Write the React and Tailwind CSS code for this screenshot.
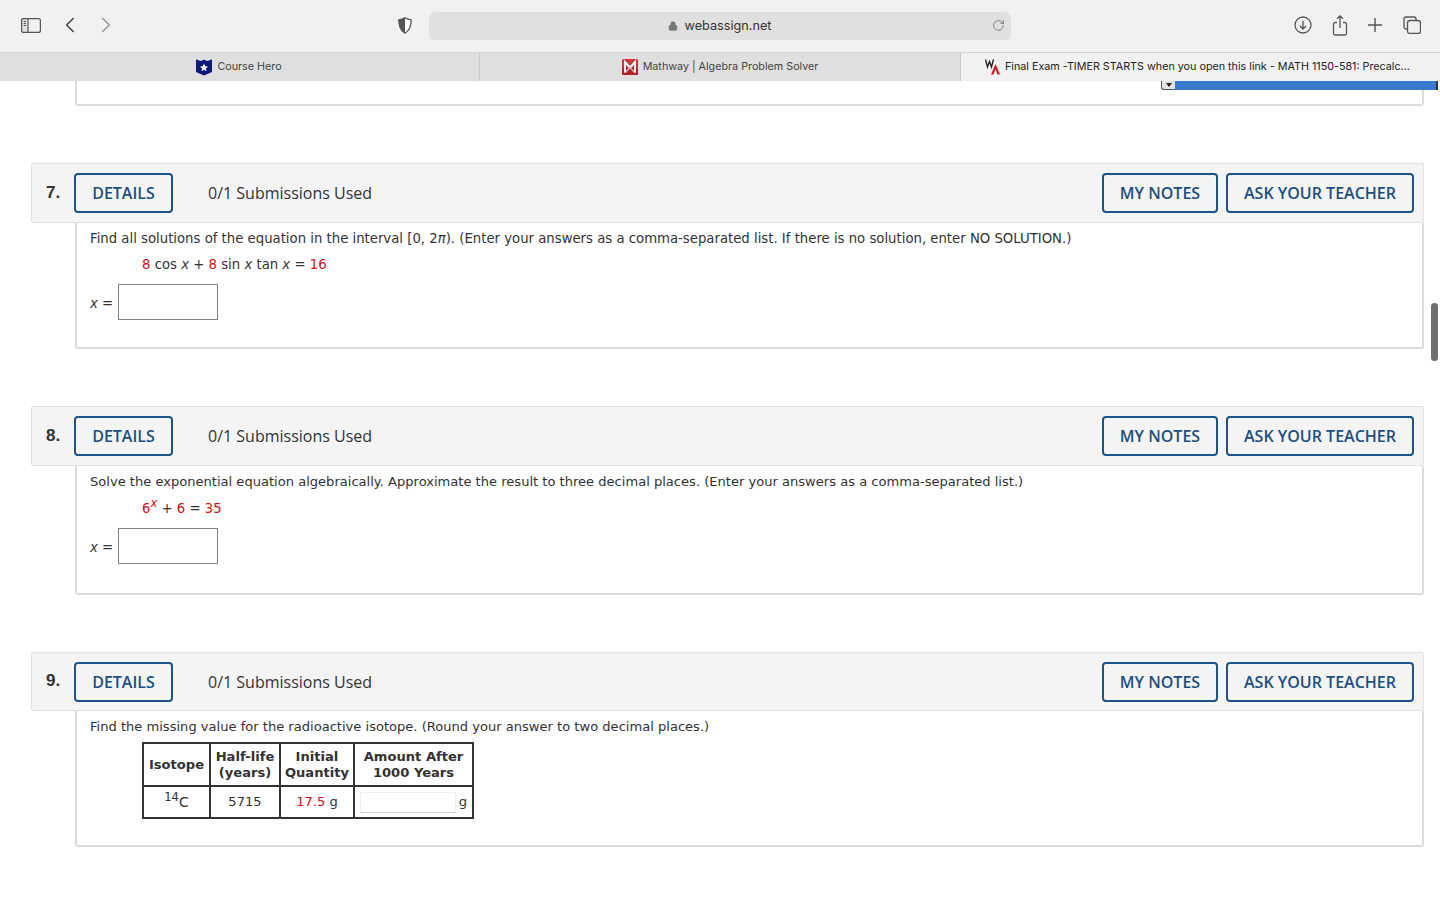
import { Lock, RotateCw } from 'lucide-react';

const Brand = "font-['Open_Sans',sans-serif]";

const Sidebar = () => (
  <svg width="20" height="15" viewBox="0 0 20 15" fill="none" stroke="#555" strokeWidth="1.200">
    <rect x="0.600" y="0.600" width="18.800" height="13.800" rx="2" />
    <path d="M0.600 2.600a2 2 0 0 1 2-2H7v13.800H2.600a2 2 0 0 1-2-2z" fill="#e2e2e2" />
    <path d="M2.700 3.500h2.300M2.700 5.500h2.300M2.700 7.500h2.300" strokeWidth="1" />
  </svg>
);

const Back = ({ color }) => (
  <svg width="10" height="16" viewBox="0 0 10 16" fill="none" stroke={color} strokeWidth="1.500">
    <path d="M8.700 1L1.700 8l7 7" />
  </svg>
);

const Forward = ({ color }) => (
  <svg width="10" height="16" viewBox="0 0 10 16" fill="none" stroke={color} strokeWidth="1.500">
    <path d="M1.300 1l7 7-7 7" />
  </svg>
);

const Shield = () => (
  <svg width="14" height="17" viewBox="0 0 14 17">
    <path d="M7 0.800c2 1.200 4 1.800 6.200 2 0 5.800-1 10.500-6.200 13.400C1.800 13.300 0.800 8.600 0.800 2.800 3 2.600 5 2 7 0.800z" fill="#fff" stroke="#555" strokeWidth="1.300" />
    <path d="M7 0.800c-2 1.200-4 1.800-6.200 2 0 5.800 1 10.500 6.200 13.400z" fill="#555" />
  </svg>
);

const Download = () => (
  <svg width="18" height="18" viewBox="0 0 18 18" fill="none" stroke="#555" strokeWidth="1.300">
    <circle cx="9" cy="9" r="8" />
    <path d="M9 4.800v8M6 10l3 3 3-3" />
  </svg>
);

const Share = () => (
  <svg width="16" height="21" viewBox="0 0 16 21" fill="none" stroke="#555" strokeWidth="1.300">
    <path d="M5 7.500H3a1.500 1.500 0 0 0-1.500 1.500v9.500A1.500 1.500 0 0 0 3 20h10a1.500 1.500 0 0 0 1.500-1.500V9A1.500 1.500 0 0 0 13 7.500h-2" />
    <path d="M8 13V1M5 3.800L8 1l3 2.800" />
  </svg>
);

const PlusIcon = () => (
  <svg width="14" height="14" viewBox="0 0 14 14" fill="none" stroke="#555" strokeWidth="1.400">
    <path d="M7 0v14M0 7h14" />
  </svg>
);

const Tabs = () => (
  <svg width="18" height="18" viewBox="0 0 18 18" fill="none" stroke="#555" strokeWidth="1.300">
    <rect x="4.500" y="4.500" width="13" height="13" rx="2.500" />
    <path d="M4.500 13H3a2 2 0 0 1-2-2V3a2 2 0 0 1 2-2h8a2 2 0 0 1 2 2v1.500" />
  </svg>
);

const HeroLogo = () => (
  <svg width="16" height="17" viewBox="0 0 16 17">
    <path d="M0 0.500c1.500 0 3 1 4 1.500 1.500 0 3-1 4-1.500 1 0.500 2.500 1.500 4 1.500 1-0.500 2.500-1.500 4-1.500v12.500l-8 3.500-8-3.500z" fill="#0f1a78" />
    <path d="M8 4.500l1.200 2.700 2.800 0.300-2.100 1.900 0.600 2.900L8 10.800l-2.500 1.500 0.600-2.900L4 7.500l2.800-0.300z" fill="#fff" />
  </svg>
);

const MathwayLogo = () => (
  <svg width="16" height="16" viewBox="0 0 16 16">
    <rect width="16" height="16" rx="1.500" fill="#d2343e" />
    <rect y="9" width="16" height="7" rx="1.500" fill="#b0202a" />
    <path d="M3 13.500V3l5 5.500L13 3v10.500" fill="none" stroke="#fff" strokeWidth="2" />
    <path d="M3.500 13.500L8 8.500l4.500 5" fill="none" stroke="#f3b9bc" strokeWidth="1.200" />
  </svg>
);

const WebAssignLogo = () => (
  <svg width="16" height="16" viewBox="0 0 16 16">
    <path d="M0.500 0.500l2 7.500 2-5.500 2 5.500 2-7.500" fill="none" stroke="#222" strokeWidth="1.400" />
    <path d="M6 15.500L10.500 5l4.500 10.500h-2.500l-2-5.500-2 5.500z" fill="#d8141c" />
  </svg>
);

const TopBar = () => (
  <div className="h-[53px] bg-[#f1f1f1] border-b border-[#d6d6d6] flex items-center pb-0.5">
    <div className="w-[429px] flex items-center pl-[21px] shrink-0">
      <Sidebar />
      <div className="ml-[24px] flex"><Back color="#444" /></div>
      <div className="ml-[26px] flex"><Forward color="#999" /></div>
      <div className="ml-[287px] flex"><Shield /></div>
    </div>
    <div className="w-[582px] h-[28px] translate-y-[1px] bg-[#e0e0e0] rounded-md flex items-center justify-center relative shrink-0">
      <Lock className="text-[#777] mr-[6px]" size={10} fill="#777" />
      <span className="text-[12.700px] text-[#333] font-['Inter',sans-serif]">webassign.net</span>
      <RotateCw className="absolute right-[6px] top-[7px] text-[#555]" size={13} strokeWidth={1.200} />
    </div>
    <div className="flex items-center ml-[283px]">
      <Download />
      <div className="ml-[20px] flex"><Share /></div>
      <div className="ml-[20px] flex"><PlusIcon /></div>
      <div className="ml-[21px] flex"><Tabs /></div>
    </div>
  </div>
);

const TabStrip = () => (
  <div className="h-[28px] flex text-[10.750px] text-[#444] font-['Inter',sans-serif]">
    <div className="w-[480px] bg-[#dfdfdf] border-r border-[#c9c9c9] flex items-center justify-center gap-[5px] pr-[1px]">
      <HeroLogo />
      <span>Course Hero</span>
    </div>
    <div className="w-[480px] bg-[#dfdfdf] flex items-center justify-center gap-[5px]">
      <MathwayLogo />
      <span>Mathway | Algebra Problem Solver</span>
    </div>
    <div className="w-[480px] bg-[#f1f1f1] flex items-center pl-[24px] gap-[4px] text-[#222] border-l border-[#c9c9c9]">
      <WebAssignLogo />
      <span className="whitespace-nowrap">Final Exam -TIMER STARTS when you open this link - MATH 1150-581: Precalc...</span>
    </div>
  </div>
);

const OutlineButton = ({ children, width }) => (
  <button className={`${width} h-[40px] border-2 border-[#1d5488] rounded-[4px] text-[#1a4f82] text-[16px] font-semibold ${Brand} whitespace-nowrap`}>
    {children}
  </button>
);

const QuestionHeader = ({ number, height = 'h-[60px]' }) => (
  <div className={`ml-[31px] w-[1393px] ${height} bg-[#f4f4f4] border border-[#e1e1e1] rounded-[2px] flex items-center pl-[14px] pr-[9px]`}>
    <span className="w-[28px] text-[17px] font-bold text-[#333] font-['Liberation_Sans',sans-serif] -mt-[1px]">{number}.</span>
    <OutlineButton width="w-[99px]">DETAILS</OutlineButton>
    <span className={`ml-[35px] text-[16px] text-[#333] ${Brand}`}>0/1 Submissions Used</span>
    <div className="ml-auto flex gap-[8px]">
      <OutlineButton width="w-[116px]">MY NOTES</OutlineButton>
      <OutlineButton width="w-[188px]">ASK YOUR TEACHER</OutlineButton>
    </div>
  </div>
);

const QuestionBody = ({ className, children }) => (
  <div className={`ml-[75px] w-[1349px] bg-white border-x-2 border-b-2 border-[#dcdcdc] rounded-b-[3px] pl-[13px] pt-[6px] text-[13.250px] text-[#333] font-['DejaVu_Sans',sans-serif] ${className}`}>
    {children}
  </div>
);

const Red = ({ children }) => <span className="text-[#d4111a]">{children}</span>;
const X = () => <i>x</i>;

const AnswerRow = () => (
  <div className="flex items-center">
    <span className="w-[28px] pt-[4px]"><X /> =</span>
    <div className="w-[100px] h-[36px] border border-[#808080] bg-white" />
  </div>
);

const Th = ({ children, width }) => (
  <th className={`${width} border-2 border-[#333] font-bold text-center leading-[16px] p-0`}>{children}</th>
);

const Td = ({ children }) => (
  <td className="border-2 border-[#333] text-center p-0">{children}</td>
);

const IsotopeTable = () => (
  <table className="ml-[52px] mt-[5px] border-collapse text-[13.100px]">
    <thead>
      <tr className="h-[43px]">
        <Th width="w-[67px]">Isotope</Th>
        <Th width="w-[70px]">Half-life<br />(years)</Th>
        <Th width="w-[74px]">Initial<br />Quantity</Th>
        <Th width="w-[119px]">Amount After<br />1000 Years</Th>
      </tr>
    </thead>
    <tbody>
      <tr className="h-[32px]">
        <Td><sup className="text-[11.500px]">14</sup><span className="text-[14px]">C</span></Td>
        <Td>5715</Td>
        <Td><Red>17.5</Red> g</Td>
        <Td>
          <div className="flex items-center pl-[5px] pr-[5px]">
            <div className="w-[96px] h-[21px] border border-[#eeeeee] border-b-[#cfcfcf]" />
            <span className="ml-auto">g</span>
          </div>
        </Td>
      </tr>
    </tbody>
  </table>
);

export default function App() {
  return (
    <div className="w-[1440px] h-[900px] overflow-hidden bg-white relative">
      <TopBar />
      <TabStrip />

      {/* tail of question 6 */}
      <div className="ml-[75px] w-[1349px] h-[25px] border-x-2 border-b-2 border-[#dcdcdc] rounded-b-[3px] relative">
        <div className="absolute right-[-16px] top-0 w-[265px] h-[9px] bg-[#3a78d0] border-r-2 border-[#333]" />
        <div className="absolute right-[247px] top-0 w-[14px] h-[9px] bg-[#e4e4e4] border-l border-b border-[#555] rounded-bl-[3px] flex items-center justify-center">
          <div className="border-x-[3px] border-x-transparent border-t-[4px] border-t-[#222]" />
        </div>
      </div>

      <div className="mt-[57px]">
        <QuestionHeader number={7} />
        <QuestionBody className="h-[126px]">
          <p className="h-[20px] leading-[20px] whitespace-nowrap">Find all solutions of the equation in the interval [0, 2<i>π</i>). (Enter your answers as a comma-separated list. If there is no solution, enter NO SOLUTION.)</p>
          <p className="ml-[52px] mt-[6px] mb-[9px] h-[20px] leading-[20px]"><Red>8</Red> cos <X /> + <Red>8</Red> sin <X /> tan <X /> = <Red>16</Red></p>
          <AnswerRow />
        </QuestionBody>
      </div>

      <div className="mt-[57px]">
        <QuestionHeader number={8} />
        <QuestionBody className="h-[129px]">
          <p className="h-[20px] leading-[20px] whitespace-nowrap text-[13.070px]">Solve the exponential equation algebraically. Approximate the result to three decimal places. (Enter your answers as a comma-separated list.)</p>
          <p className="ml-[52px] mt-[7px] mb-[9px] h-[20px] leading-[20px]"><Red>6</Red><sup className="text-[11.500px] text-[#d4111a]"><i>x</i></sup> + <Red>6</Red> = <Red>35</Red></p>
          <AnswerRow />
        </QuestionBody>
      </div>

      <div className="mt-[57px]">
        <QuestionHeader number={9} height="h-[59px]" />
        <QuestionBody className="h-[136px]">
          <p className="h-[20px] leading-[20px] whitespace-nowrap text-[13.070px]">Find the missing value for the radioactive isotope. (Round your answer to two decimal places.)</p>
          <IsotopeTable />
        </QuestionBody>
      </div>

      {/* scrollbar thumb overlay */}
      <div className="absolute right-[2px] top-[303px] w-[7px] h-[58px] rounded-full bg-[#6f6f6f]" />
    </div>
  );
}
